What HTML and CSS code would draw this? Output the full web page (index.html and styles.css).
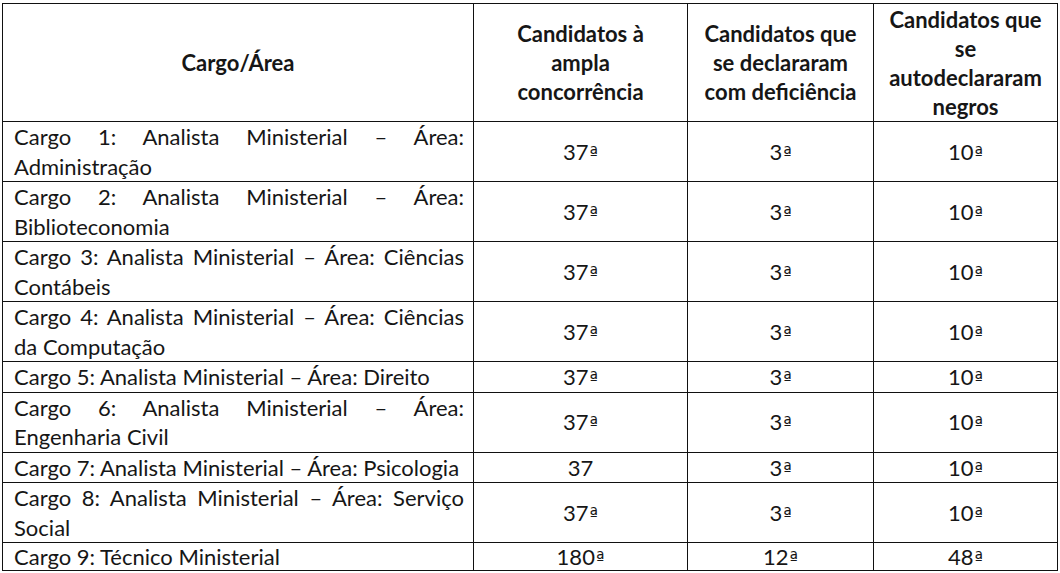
FILE: index.html
```html
<!DOCTYPE html>
<html lang="pt">
<head>
<meta charset="utf-8">
<title>Tabela</title>
<link rel="stylesheet" href="styles.css">
</head>
<body>
<table class="tbl">
  <colgroup>
    <col class="c1"><col class="c2"><col class="c3"><col class="c4">
  </colgroup>
  <thead>
    <tr class="head">
      <th>Cargo/Área</th>
      <th>Candidatos à<br>ampla<br>concorrência</th>
      <th>Candidatos que<br>se declararam<br>com deficiência</th>
      <th>Candidatos que<br>se<br>autodeclararam<br>negros</th>
    </tr>
  </thead>
  <tbody>
    <tr><td class="name"><span class="l1">Cargo 1: Analista Ministerial – Área:</span> Administração</td><td>37<span class="ord">ª</span></td><td>3<span class="ord">ª</span></td><td>10<span class="ord">ª</span></td></tr>
    <tr><td class="name"><span class="l1">Cargo 2: Analista Ministerial – Área:</span> Biblioteconomia</td><td>37<span class="ord">ª</span></td><td>3<span class="ord">ª</span></td><td>10<span class="ord">ª</span></td></tr>
    <tr><td class="name"><span class="l1">Cargo 3: Analista Ministerial – Área: Ciências</span> Contábeis</td><td>37<span class="ord">ª</span></td><td>3<span class="ord">ª</span></td><td>10<span class="ord">ª</span></td></tr>
    <tr><td class="name"><span class="l1">Cargo 4: Analista Ministerial – Área: Ciências</span> da Computação</td><td>37<span class="ord">ª</span></td><td>3<span class="ord">ª</span></td><td>10<span class="ord">ª</span></td></tr>
    <tr><td class="name">Cargo 5: Analista Ministerial – Área: Direito</td><td>37<span class="ord">ª</span></td><td>3<span class="ord">ª</span></td><td>10<span class="ord">ª</span></td></tr>
    <tr><td class="name"><span class="l1">Cargo 6: Analista Ministerial – Área:</span> Engenharia Civil</td><td>37<span class="ord">ª</span></td><td>3<span class="ord">ª</span></td><td>10<span class="ord">ª</span></td></tr>
    <tr><td class="name">Cargo 7: Analista Ministerial – Área: Psicologia</td><td>37</td><td>3<span class="ord">ª</span></td><td>10<span class="ord">ª</span></td></tr>
    <tr><td class="name"><span class="l1">Cargo 8: Analista Ministerial – Área: Serviço</span> Social</td><td>37<span class="ord">ª</span></td><td>3<span class="ord">ª</span></td><td>10<span class="ord">ª</span></td></tr>
    <tr class="last"><td class="name">Cargo 9: Técnico Ministerial</td><td>180<span class="ord">ª</span></td><td>12<span class="ord">ª</span></td><td>48<span class="ord">ª</span></td></tr>
  </tbody>
</table>
</body>
</html>
```

FILE: styles.css
```css
html, body {
  margin: 0;
  padding: 0;
  background: #ffffff;
}
body {
  padding: 3px 0 0 2px;
  font-family: "Lato", "Liberation Sans", sans-serif;
  color: #161616;
}
.tbl {
  border-collapse: collapse;
  table-layout: fixed;
  width: 1055px;
  font-size: 22px;
}
.c1 { width: 471px; }
.c2 { width: 214px; }
.c3 { width: 186px; }
.c4 { width: 184px; }
.tbl th, .tbl td {
  border: 1px solid #111;
  padding: 0;
  text-align: center;
  vertical-align: middle;
}
.head th {
  height: 117px;
  font-weight: bold;
  font-size: 22px;
  line-height: 29px;
}
.tbl td {
  line-height: 29.5px;
}
.tbl .last td {
  line-height: 27px;
}
.tbl td.name {
  text-align: left;
  padding: 0 9px 0 11px;
  white-space: nowrap;
}
.l1 {
  display: block;
  text-align: justify;
  text-align-last: justify;
}
.ord {
  font-family: "DejaVu Sans", sans-serif;
  font-size: 18px;
  line-height: 0;
  margin-left: 1px;
}
```
